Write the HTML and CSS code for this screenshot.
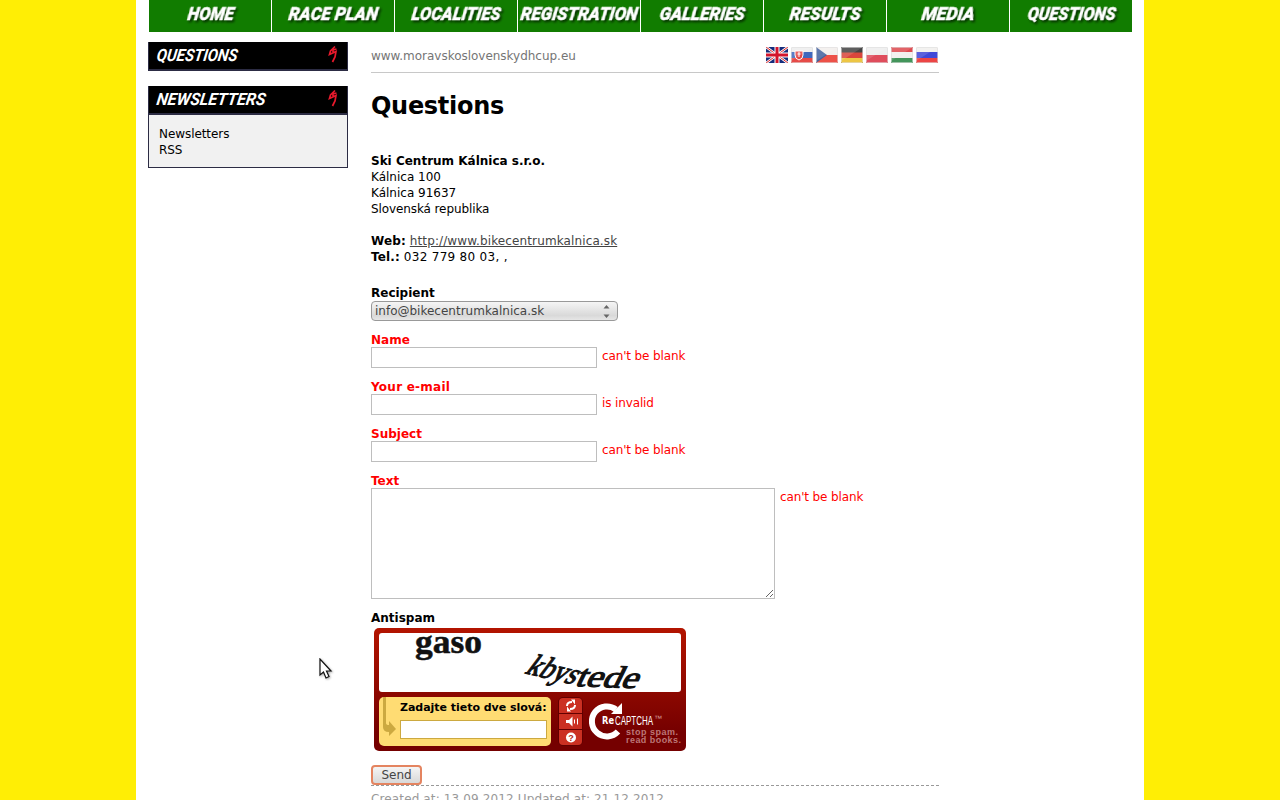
FILE: index.html
```html
<!DOCTYPE html>
<html lang="en">
<head>
<meta charset="utf-8">
<title>Questions</title>
<link rel="stylesheet" href="styles.css">
</head>
<body>
<svg class="defs" width="0" height="0" aria-hidden="true">
  <symbol id="gloss" viewBox="0 0 22 16"><path d="M0 0h22L0 14z" fill="#fff" opacity=".14"/><rect x=".5" y=".5" width="21" height="15" rx="1" fill="none" stroke="#ddd" stroke-opacity=".6"/></symbol>
  <symbol id="bolt" viewBox="0 0 10 19"><path d="M7 1.500 2.500 6 1.500 9.500 8 6.500 7 12 4.500 17M5 7V5l3.500-1" fill="none" stroke="#e8192c" stroke-width="1.700"/></symbol>
</svg>
<div class="page">
  <nav class="nav">
    <a><svg width="122" height="32"><text transform="translate(38 20) skewX(-8)" textLength="46" lengthAdjust="spacingAndGlyphs">HOME</text></svg></a>
    <a><svg width="122" height="32"><text transform="translate(16 20) skewX(-8)" textLength="89" lengthAdjust="spacingAndGlyphs">RACE PLAN</text></svg></a>
    <a><svg width="122" height="32"><text transform="translate(16 20) skewX(-8)" textLength="89" lengthAdjust="spacingAndGlyphs">LOCALITIES</text></svg></a>
    <a><svg width="122" height="32"><text transform="translate(2 20) skewX(-8)" textLength="117" lengthAdjust="spacingAndGlyphs">REGISTRATION</text></svg></a>
    <a><svg width="122" height="32"><text transform="translate(18 20) skewX(-8)" textLength="85" lengthAdjust="spacingAndGlyphs">GALLERIES</text></svg></a>
    <a><svg width="122" height="32"><text transform="translate(25 20) skewX(-8)" textLength="71" lengthAdjust="spacingAndGlyphs">RESULTS</text></svg></a>
    <a><svg width="122" height="32"><text transform="translate(34 20) skewX(-8)" textLength="53" lengthAdjust="spacingAndGlyphs">MEDIA</text></svg></a>
    <a><svg width="122" height="32"><text transform="translate(17 20) skewX(-8)" textLength="88" lengthAdjust="spacingAndGlyphs">QUESTIONS</text></svg></a>
  </nav>
  <div class="columns">
    <aside class="side">
      <section class="box">
        <h2><svg width="120" height="27"><text transform="translate(7 19) skewX(-8)" textLength="81" lengthAdjust="spacingAndGlyphs">QUESTIONS</text></svg><svg class="bolt" width="10" height="19"><use href="#bolt"/></svg></h2>
      </section>
      <section class="box">
        <h2><svg width="130" height="27"><text transform="translate(7 19) skewX(-8)" textLength="109" lengthAdjust="spacingAndGlyphs">NEWSLETTERS</text></svg><svg class="bolt" width="10" height="19"><use href="#bolt"/></svg></h2>
        <div class="links"><a>Newsletters</a><a>RSS</a></div>
      </section>
    </aside>
    <main class="main">
      <header class="top">
        <span>www.moravskoslovenskydhcup.eu</span>
        <div class="flags">
          <svg width="22" height="16" viewBox="0 0 22 16"><rect width="22" height="16" fill="#152d7c"/><path d="M0 0l22 16M22 0 0 16" stroke="#fff" stroke-width="2.600"/><path d="M0 0l22 16M22 0 0 16" stroke="#d22" stroke-width="1"/><path d="M11 0v16M0 8h22" stroke="#fff" stroke-width="5"/><path d="M11 0v16M0 8h22" stroke="#d2142c" stroke-width="3"/></svg>
          <svg width="22" height="16" viewBox="0 0 22 16"><rect width="22" height="16" fill="#eee"/><path d="M0 5h22v6H0z" fill="#3f68bd"/><path d="M0 11h22v5H0z" fill="#e64b48"/><path d="M4 4h8v4q0 4-4 5-4-1-4-5z" fill="#e34848" stroke="#fff"/><path d="M8 5v5M6.500 7h3" stroke="#fff"/><use href="#gloss"/></svg>
          <svg width="22" height="16" viewBox="0 0 22 16"><rect width="22" height="16" fill="#f3efed"/><path d="M0 8h22v8H0z" fill="#ed5148"/><path d="M0 0l11 8-11 8z" fill="#44629f"/><use href="#gloss"/></svg>
          <svg width="22" height="16" viewBox="0 0 22 16"><rect width="22" height="16" fill="#444"/><path d="M0 5.500h22V11H0z" fill="#d9463c"/><path d="M0 11h22v5H0z" fill="#edc644"/><use href="#gloss"/></svg>
          <svg width="22" height="16" viewBox="0 0 22 16"><rect width="22" height="16" fill="#eee"/><path d="M0 8h22v8H0z" fill="#df4d5c"/><use href="#gloss"/></svg>
          <svg width="22" height="16" viewBox="0 0 22 16"><rect width="22" height="16" fill="#f2f0ee"/><path d="M0 0h22v5H0z" fill="#df4a4f"/><path d="M0 11h22v5H0z" fill="#43955b"/><use href="#gloss"/></svg>
          <svg width="22" height="16" viewBox="0 0 22 16"><rect width="22" height="16" fill="#f2f0ee"/><path d="M0 5h22v6H0z" fill="#4048d8"/><path d="M0 11h22v5H0z" fill="#ec4545"/><use href="#gloss"/></svg>
        </div>
      </header>
      <h1>Questions</h1>
      <p class="address"><b>Ski Centrum Kálnica s.r.o.</b><br>Kálnica 100<br>Kálnica 91637<br><span class="snug">Slovenská republika</span></p>
      <p class="contact"><b>Web:</b> <a class="link">http://www.bikecentrumkalnica.sk</a><br><b>Tel.:</b> <span class="phone">032 779 80 03, ,</span></p>
      <form>
        <div class="field"><label>Recipient</label>
          <div class="select"><span>info@bikecentrumkalnica.sk</span><svg width="7" height="13" viewBox="0 0 7 13"><path d="M.5 3.500 3.500 0l3 3.500zM.5 9.500h6l-3 3.500z" fill="#666"/></svg></div>
        </div>
        <div class="field error"><label>Name</label><div class="row"><input type="text"><span>can't be blank</span></div></div>
        <div class="field error"><label class="wide">Your e-mail</label><div class="row"><input type="text"><span>is invalid</span></div></div>
        <div class="field error"><label>Subject</label><div class="row"><input type="text"><span>can't be blank</span></div></div>
        <div class="field error"><label>Text</label><div class="row"><textarea></textarea><span>can't be blank</span></div></div>
        <div class="field"><label>Antispam</label>
          <div class="captcha">
            <svg class="challenge" width="302" height="59">
              <text class="word" x="36" y="20" font-size="33" textLength="67" lengthAdjust="spacingAndGlyphs">gaso</text>
              <g class="word slanted" font-size="31">
                <text transform="translate(145 40) rotate(13) skewX(-24)" textLength="50" lengthAdjust="spacingAndGlyphs">kbys</text>
                <text transform="translate(195 53) rotate(2) skewX(-24)" textLength="62" lengthAdjust="spacingAndGlyphs">tede</text>
              </g>
            </svg>
            <div class="controls">
              <div class="answer">
                <svg width="17" height="49" viewBox="0 0 17 49"><path d="M4 0h3v26q0 2 3 2v-4l7 8-7 7v-4q-6 0-6-5z" fill="#cca940"/></svg>
                <div class="prompt"><b>Zadajte tieto dve slová:</b><input type="text"></div>
              </div>
              <div class="buttons">
                <svg width="23" height="15" viewBox="0 0 23 15"><path d="M8 8q0-4 5-4M16 7q0 4-5 4" fill="none" stroke="#fff" stroke-width="2"/><path d="M12 1.500h4v5zM12 13.500H8v-5z" fill="#fff"/></svg>
                <svg width="23" height="15" viewBox="0 0 23 15"><path d="M7 6h3l3.500-3.500v10L10 9H7z" fill="#fff"/><path d="M15.500 5.500v4M18.500 4.500v6" stroke="#fff"/></svg>
                <svg width="23" height="15" viewBox="0 0 23 15"><circle cx="12" cy="7.500" r="5" fill="#fff"/><text x="9.300" y="11" class="help">?</text></svg>
              </div>
              <svg class="logo" width="98" height="49" viewBox="0 0 98 49">
                <path d="M30 12.500A15 15 0 1 0 32 34.500" fill="none" stroke="#fff" stroke-width="6"/><path d="M36 6v11H25z" fill="#fff"/>
                <text x="16" y="27" class="re" textLength="12" lengthAdjust="spacingAndGlyphs">Re</text>
                <text x="29" y="28" class="cap" textLength="38" lengthAdjust="spacingAndGlyphs">CAPTCHA</text>
                <text x="68" y="24" class="tm">™</text>
                <text x="40" y="38" class="slogan" textLength="52">stop spam.</text>
                <text x="40" y="46" class="slogan" textLength="55">read books.</text>
              </svg>
            </div>
          </div>
        </div>
        <button type="button">Send</button>
      </form>
      <footer class="dates">Created at: 13.09.2012 Updated at: 21.12.2012</footer>
    </main>
  </div>
</div>
<svg class="cursor" width="14" height="21" viewBox="0 0 14 21"><path d="M1 1v16l3.500-3 2.500 6 3-1.500L7.500 13H12z" fill="#fff" stroke="#111" stroke-width="1.200"/></svg>
</body>
</html>
```
FILE: styles.css
```css
* { box-sizing: border-box; }
html { height: 100%; overflow: hidden; }
body { margin: 0; height: 800px; overflow: hidden; background: #ffee05; color: #000; font: 12px/16px "DejaVu Sans", sans-serif; }
svg { display: block; flex: none; }
.defs { position: absolute; }
.page { width: 1008px; height: 800px; margin: 0 auto; background: #fff; overflow: hidden; }
.nav { display: flex; gap: 1px; padding-left: 13px; height: 32px; }
.nav a { width: 122px; background: #117c00; }
.nav text, .box text { font: italic 900 18px Roboto, sans-serif; fill: #fff; }
.nav text { stroke: #fff; stroke-width: .4px; filter: drop-shadow(2px 2px 1px #063500); }
.columns { display: flex; padding: 10px 0 0 12px; }
.side { width: 200px; margin-right: 23px; }
.box { border: 1px solid #2c2c44; border-top: 0; background: #f1f1f1; margin-bottom: 15px; }
.box h2 { display: flex; justify-content: space-between; margin: 0; height: 28px; background: #000; border-bottom: 1px solid #2c2c44; }
.box + .box h2 { height: 29px; border-bottom-width: 2px; }
.box text { font-size: 17px; font-weight: 700; }
.bolt { margin: 3px 9px 0 0; }
.links { display: flex; flex-direction: column; padding: 11px 10px 9px; height: 52px; letter-spacing: -.07px; }
.main { width: 568px; }
.top { display: flex; justify-content: space-between; height: 31px; padding-top: 5px; border-bottom: 1px solid #c8c8c8; color: #757575; line-height: 18px; letter-spacing: -.02px; }
.flags { display: flex; gap: 3px; margin-right: 1px; }
.flags svg { border-radius: 1px; }
h1 { margin: 18px 0 32px; font-size: 24px; line-height: 30px; letter-spacing: -.3px; }
p { margin: 0 0 16px; }
.contact { margin-bottom: 20px; }
.snug { letter-spacing: -.1px; }
.contact b { letter-spacing: .15px; }
.phone { letter-spacing: .3px; }
.link { color: #444; text-decoration: underline; letter-spacing: .12px; }
label { display: block; height: 15px; font-weight: bold; }
.wide { letter-spacing: .25px; }
.field { margin-bottom: 11px; }
.error { color: #f00; }
.row { display: flex; gap: 5px; }
.row span { padding-top: 1px; letter-spacing: -.13px; }
.row input { width: 226px; height: 21px; }
.row input, textarea { display: block; margin: 0; padding: 0; border: 1px solid #bebebe; background: #fff; }
textarea { width: 404px; height: 111px; resize: both; }
.select { display: flex; justify-content: space-between; align-items: center; width: 247px; height: 20px; margin-top: 1px; padding: 0 7px 0 3px; border: 1px solid #999; border-radius: 4px; background: linear-gradient(#f5f5f5, #d9d9d9 75%, #e6e6e6); color: #444; }
.captcha { width: 312px; height: 123px; margin: 3px 0 14px 3px; padding: 5px; border-radius: 5px; background: linear-gradient(#b31400, #750000 85%); }
.challenge { background: #fff; border-radius: 3px; overflow: hidden; }
.word { font-family: "Liberation Serif", serif; font-weight: bold; fill: #111; stroke: #111; stroke-width: .5px; }
.slanted { font-weight: normal; stroke-width: 1.1px; }
.controls { display: flex; margin-top: 5px; }
.answer { display: flex; flex: none; gap: 4px; width: 172px; height: 49px; border-radius: 5px; background: #ffdc73; }
.prompt { padding-top: 3px; font-size: 11px; line-height: 15px; white-space: nowrap; letter-spacing: -.03px; }
.prompt b { display: block; }
.prompt input { display: block; width: 147px; height: 19px; margin: 5px 0 0; border: 1px solid #cca940; background: #fff; }
.buttons { display: flex; flex: none; flex-direction: column; gap: 1px; width: 25px; height: 49px; margin: 0 6px 0 7px; border: 1px solid #620000; border-radius: 5px; background: #620000; overflow: hidden; }
.buttons svg { background: #cb3022; }
.help { font: bold 9px "Liberation Sans", sans-serif; fill: #b71c12; }
.logo { margin-left: -3px; }
.re { font: bold 10px "DejaVu Sans", sans-serif; fill: #fff; }
.cap { font: 12px "Liberation Sans", sans-serif; fill: #fff; }
.tm { font: 8px "Liberation Sans", sans-serif; fill: #d49a9a; }
.slogan { font: bold 9px "Liberation Sans", sans-serif; fill: #bc7777; }
button { display: block; width: 51px; height: 20px; padding: 0; border: 2px solid #e48460; border-radius: 4px; background: linear-gradient(#f5f5f5, #d8d8d8); color: #444; font: 12px/15px "DejaVu Sans", sans-serif; }
.dates { border-top: 1px dashed #999; padding-top: 5px; color: #999; letter-spacing: .13px; }
.cursor { position: absolute; left: 319px; top: 658px; filter: drop-shadow(1px 1px 1px #aaa); }
```
